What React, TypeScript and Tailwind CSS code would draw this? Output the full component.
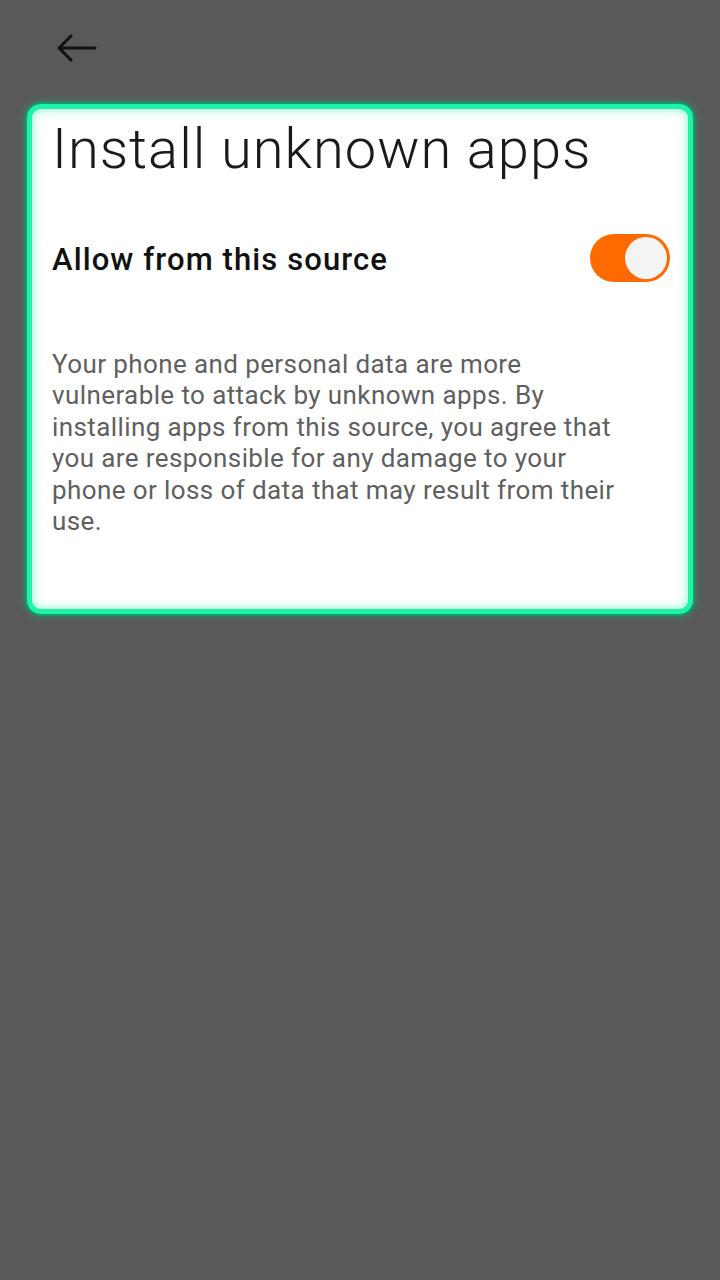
import React from "react";

const BackArrow: React.FC = () => (
  <svg width="40" height="28" viewBox="0 0 40 28" fill="none">
    <path
      d="M38 14H3M14 2L2 14l12 12"
      stroke="#111"
      strokeWidth="3"
      strokeLinecap="round"
      strokeLinejoin="round"
    />
  </svg>
);

const Toggle: React.FC = () => (
  <div className="flex h-[48px] w-[80px] items-center justify-end rounded-full bg-[#ff6a00] p-[3px]">
    <div className="h-[42px] w-[42px] rounded-full bg-[#f4f4f4]" />
  </div>
);

export default function App() {
  return (
    <div
      className="min-h-[1280px] w-full bg-[#595959]"
      style={{ fontFamily: "Roboto, 'Noto Sans', sans-serif" }}
    >
      <div className="flex h-[104px] items-start pl-[57px] pt-[34px]">
        <BackArrow />
      </div>

      <div className="mx-[27px] h-[510px] rounded-[14px] border-[5px] border-[#20f2a6] bg-white shadow-[0_0_0_2px_#0f9d6a,0_0_8px_2px_rgba(20,200,140,0.5),inset_0_0_8px_2px_rgba(60,240,170,0.45)]">
        <div className="pl-[20px] pr-[18px]">
          <h1 className="pt-[8px] text-[56px] font-light leading-[64px] tracking-[1px] text-[#1a1a1a]">
            Install unknown apps
          </h1>

          <div className="mt-[53px] flex items-center justify-between">
            <span className="pt-[4px] text-[31px] font-medium leading-[40px] tracking-[1.1px] text-[#111]">
              Allow from this source
            </span>
            <Toggle />
          </div>

          <p className="mt-[67px] w-[580px] text-[26px] leading-[31.4px] tracking-[0.4px] text-[#5f5f5f]">
            Your phone and personal data are more vulnerable to attack by
            unknown apps. By installing apps from this source, you agree that
            you are responsible for any damage to your phone or loss of data
            that may result from their use.
          </p>
        </div>
      </div>
    </div>
  );
}
